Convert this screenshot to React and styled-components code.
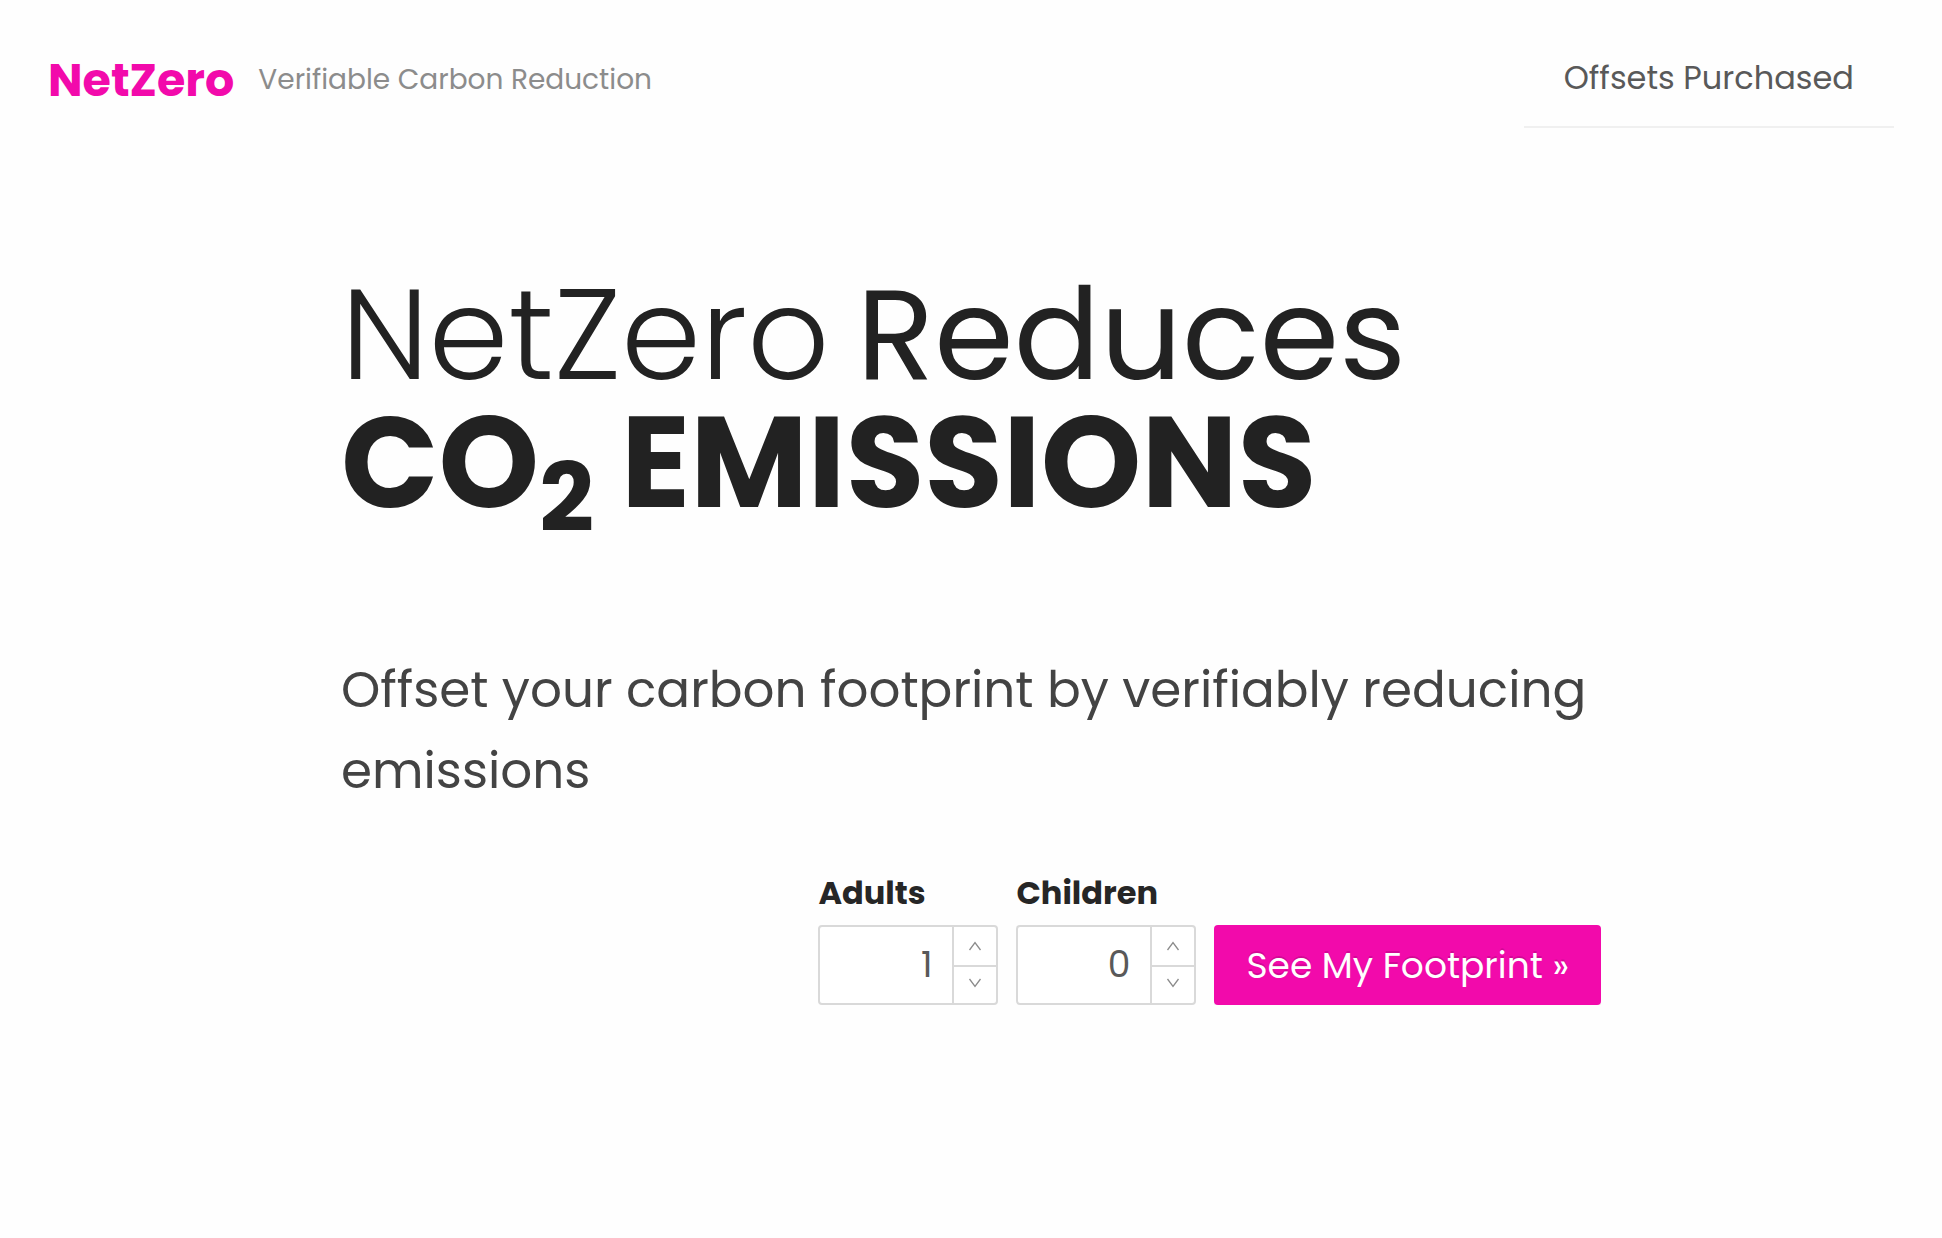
import React, { useState } from 'react';
import styled, { createGlobalStyle } from 'styled-components';

const App = () => {
    const [adults, setAdults] = useState(1);
    const [children, setChildren] = useState(0);

    return (
        <>
            <GlobalStyle />
            <Header>
                <Brand>
                    <Logo href="/">NetZero</Logo>
                    <Tagline>Verifiable Carbon Reduction</Tagline>
                </Brand>
                <nav>
                    <MenuLink href="/purchased">Offsets Purchased</MenuLink>
                </nav>
            </Header>
            <Main>
                <Title>
                    <Weight $weight={300}>NetZero</Weight> <Weight $weight={400}>Reduces</Weight>
                    <br />
                    CO<Sub>2</Sub> EMISSIONS
                </Title>
                <Lead>Offset your carbon footprint by verifiably reducing emissions</Lead>
                <Form onSubmit={(e) => e.preventDefault()}>
                    <NumberField id="adults" label="Adults" value={adults} onChange={setAdults} />
                    <NumberField id="children" label="Children" value={children} onChange={setChildren} />
                    <SubmitButton type="submit">See My Footprint »</SubmitButton>
                </Form>
            </Main>
        </>
    );
};

const NumberField = ({ id, label, value, onChange }) => {
    const step = (amount) => onChange((prev) => Math.max(0, Number(prev) + amount));

    return (
        <Field>
            <Label htmlFor={id}>{label}</Label>
            <NumberBox>
                <NumberInput
                    id={id}
                    inputMode="numeric"
                    value={value}
                    onChange={(e) => onChange(e.target.value.replace(/\D/g, ''))}
                />
                <Steps>
                    <StepButton type="button" aria-label={`More ${label}`} onClick={() => step(1)}>
                        <svg width="14" height="10" viewBox="0 0 14 10">
                            <path d="M1.5 9L7 1.5L12.5 9" />
                        </svg>
                    </StepButton>
                    <StepButton type="button" aria-label={`Fewer ${label}`} onClick={() => step(-1)}>
                        <svg width="14" height="10" viewBox="0 0 14 10">
                            <path d="M1.5 1L7 8.5L12.5 1" />
                        </svg>
                    </StepButton>
                </Steps>
            </NumberBox>
        </Field>
    );
};

const GlobalStyle = createGlobalStyle`
    * {
        box-sizing: border-box;
    }

    body {
        margin: 0;
        background: #fefefe;
        color: #222;
        font-family: Poppins, Inter, "Open Sans", sans-serif;
    }

    button, input {
        font-family: inherit;
    }
`;

const Header = styled.header`
    display: flex;
    justify-content: space-between;
    align-items: flex-end;
    height: 128px;
    padding: 0 48px;
`;

const Brand = styled.div`
    display: flex;
    align-items: center;
    gap: 24px;
    padding-bottom: 20px;
`;

const Logo = styled.a`
    font-size: 46px;
    line-height: 56px;
    font-weight: 700;
    color: #f20aab;
    text-decoration: none;
`;

const Tagline = styled.span`
    font-size: 28px;
    line-height: 56px;
    color: #8c8c8c;
`;

const MenuLink = styled.a`
    display: block;
    padding: 0 40px 26px;
    border-bottom: 2px solid #f0f0f0;
    font-size: 32px;
    line-height: 44px;
    color: #595959;
    text-decoration: none;
`;

const Main = styled.main`
    width: 1260px;
    max-width: 100%;
    margin: 0 auto;
    padding-top: 143px;
`;

const Title = styled.h1`
    margin: 0;
    font-size: 128px;
    line-height: 128px;
    font-weight: 700;
`;

const Weight = styled.span`
    font-weight: ${({ $weight }) => $weight};
`;

const Sub = styled.sub`
    position: relative;
    bottom: -24px;
    font-size: 96px;
    line-height: 0;
    vertical-align: baseline;
`;

const Lead = styled.p`
    margin: 122px 0 0;
    font-size: 50px;
    line-height: 81px;
    color: #434343;
`;

const Form = styled.form`
    display: flex;
    justify-content: flex-end;
    align-items: flex-end;
    gap: 18px;
    margin-top: 58px;
`;

const Field = styled.div`
    display: flex;
    flex-direction: column;
    gap: 8px;
`;

const Label = styled.label`
    font-size: 32px;
    line-height: 48px;
    font-weight: 700;
    color: #262626;
`;

const NumberBox = styled.div`
    display: flex;
    width: 180px;
    height: 80px;
    border: 2px solid #d9d9d9;
    border-radius: 4px;
    background: #fff;
    overflow: hidden;
`;

const NumberInput = styled.input`
    flex: 1;
    min-width: 0;
    padding: 0 20px 2px;
    border: none;
    outline: none;
    background: none;
    font-size: 36px;
    text-align: right;
    color: #595959;
`;

const Steps = styled.div`
    display: grid;
    grid-template-rows: 1fr 1fr;
    width: 44px;
    border-left: 2px solid #d9d9d9;
`;

const StepButton = styled.button`
    display: flex;
    align-items: center;
    justify-content: center;
    padding: 0;
    border: none;
    background: none;
    cursor: pointer;

    & + & {
        padding-bottom: 4px;
        border-top: 2px solid #d9d9d9;
    }

    path {
        fill: none;
        stroke: #8c8c8c;
        stroke-width: 1.3;
    }
`;

const SubmitButton = styled.button`
    height: 80px;
    padding: 0 32px;
    border: none;
    border-radius: 4px;
    background: #f20aab;
    box-shadow: 0 4px 0 rgba(0, 0, 0, 0.043);
    font-size: 36px;
    font-weight: 400;
    color: #fff;
    text-shadow: 0 -2px 0 rgba(0, 0, 0, 0.12);
    cursor: pointer;
`;

export default App;
